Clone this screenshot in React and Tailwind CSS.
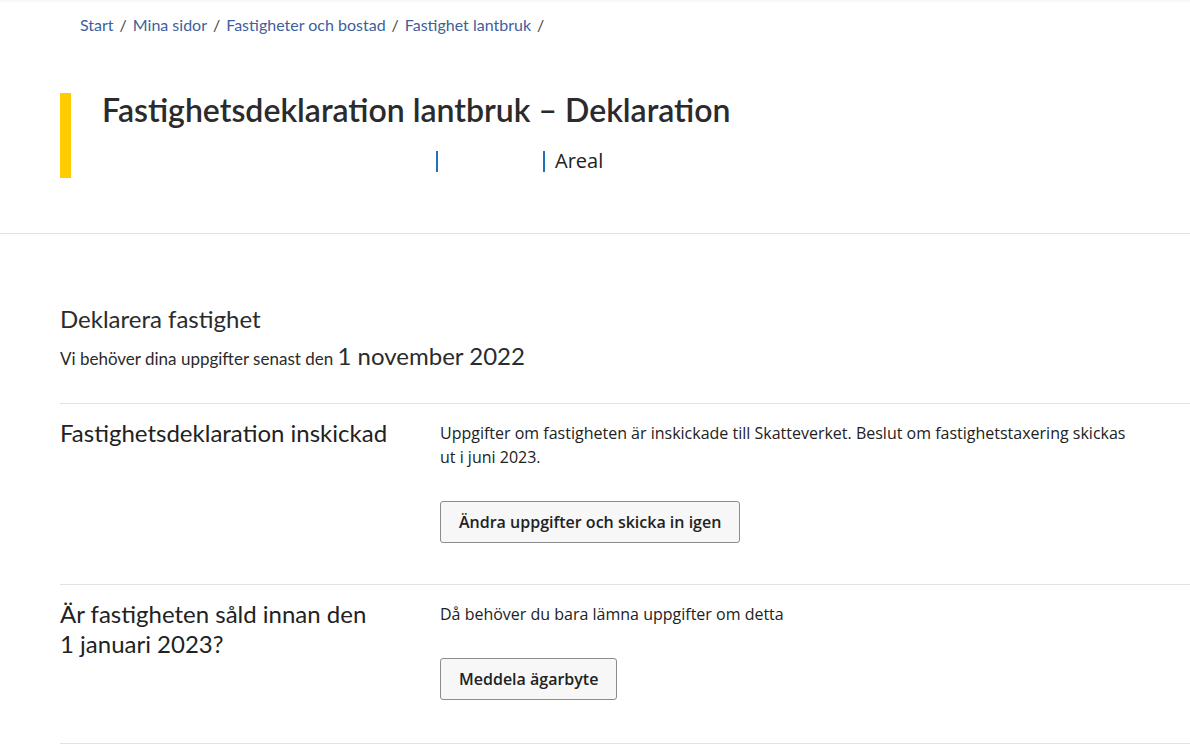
import React from 'react';

const crumbs = ['Start', 'Mina sidor', 'Fastigheter och bostad', 'Fastighet lantbruk'];

function Row({ title, text, button, last }) {
  return (
    <div className={`ml-[60px] border-t border-[#e2e2e2] pt-[14px] flex ${last ? 'pb-[43px] border-b' : 'pb-[41px]'}`}>
      <h3 className="w-[380px] shrink-0 pr-[40px] text-[24px] leading-[30px] text-[#222] font-['Lato',sans-serif]">{title}</h3>
      <div className="w-[695px] pt-[3px]">
        <p className="text-[16px] leading-[24px] text-[#222] font-['Open_Sans',sans-serif]">{text}</p>
        <button className="mt-[32px] h-[42px] px-[18px] rounded-[3px] border border-[#8c8c8c] bg-[#f7f7f7] text-[16px] font-semibold text-[#222] font-['Open_Sans',sans-serif]">
          {button}
        </button>
      </div>
    </div>
  );
}

export default function App() {
  return (
    <div className="min-h-screen bg-white shadow-[inset_0_3px_3px_-2px_rgba(0,0,0,0.06)] font-['Lato',sans-serif] text-[#2b2b2b]">
      {/* breadcrumb */}
      <nav className="pl-[80px] pt-[15px] text-[16px] leading-[20px]">
        {crumbs.map((c) => (
          <span key={c}>
            <a className="text-[#3e5f9b]">{c}</a>
            <span className="mx-[6px] text-[#444]">/</span>
          </span>
        ))}
      </nav>

      {/* page header */}
      <header className="mt-[58px] ml-[60px] flex">
        <div className="w-[11px] bg-[#fecc00]" />
        <div className="pl-[31px] pb-[3px]">
          <h1 className="text-[32px] leading-[34px] font-semibold text-[#2b2b2b]">
            Fastighetsdeklaration lantbruk – Deklaration
          </h1>
          <div className="mt-[20px] flex items-center h-[28px] text-[20px] font-['Open_Sans',sans-serif] text-[#222]">
            <span className="w-[334px]" />
            <span className="h-[21px] border-l-2 border-[#1f72b8]" />
            <span className="w-[105px]" />
            <span className="h-[21px] border-l-2 border-[#1f72b8]" />
            <span className="ml-[10px]">Areal</span>
          </div>
        </div>
      </header>

      <div className="mt-[55px] border-t border-[#e2e2e2]" />

      {/* declare */}
      <section className="pl-[60px] pt-[69px] pb-[28px]">
        <h2 className="text-[24px] leading-[32px] text-[#2b2b2b]">Deklarera fastighet</h2>
        <p className="mt-[5px] leading-[32px] text-[17px] text-[#2b2b2b]">
          Vi behöver dina uppgifter senast den <span className="text-[24px]">1 november 2022</span>
        </p>
      </section>

      <Row
        title="Fastighetsdeklaration inskickad"
        text="Uppgifter om fastigheten är inskickade till Skatteverket. Beslut om fastighetstaxering skickas ut i juni 2023."
        button="Ändra uppgifter och skicka in igen"
      />
      <Row
        title={'Är fastigheten såld innan den 1\u00a0januari 2023?'}
        text="Då behöver du bara lämna uppgifter om detta"
        button="Meddela ägarbyte"
        last
      />
    </div>
  );
}
